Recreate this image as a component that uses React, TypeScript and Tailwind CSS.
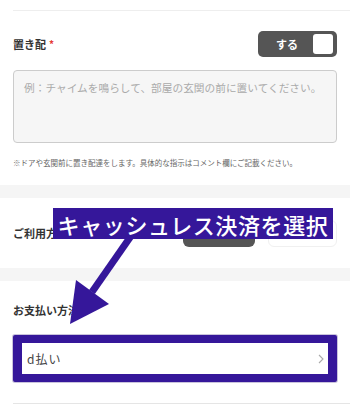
import React from "react";

export default function App() {
  return (
    <div
      className="relative w-[350px] h-[417px] overflow-hidden bg-white text-[#333]"
      style={{ fontFamily: '"Noto Sans CJK JP", "Noto Sans", sans-serif' }}
    >
      <div className="h-[10px]" />
      <div className="ml-[13px] border-t border-[#eeeeee]" />

      {/* 置き配 section */}
      <div className="px-[13px] pt-[20px] pb-[16px]">
        <div className="flex items-center justify-between h-[26px]">
          <div className="text-[11px] font-bold leading-[16px] text-[#333]">
            置き配<span className="text-[#e53935] ml-[3px] text-[10px] align-top">*</span>
          </div>
          <div className="w-[79px] h-[26px] rounded-[5px] bg-[#555555] flex items-center pl-[18px] pr-[4px]">
            <span className="flex-1 text-white text-[11px] font-bold leading-none">する</span>
            <span className="w-[20px] h-[20px] rounded-[3px] bg-white" />
          </div>
        </div>
        <div className="mt-[13px] h-[73px] rounded-[4px] border border-[#cccccc] bg-[#f6f6f6] px-[10px] pt-[9px]">
          <div className="text-[10.7px] leading-[16px] text-[#aaaaaa] whitespace-nowrap">
            例：チャイムを鳴らして、部屋の玄関の前に置いてください。
          </div>
        </div>
        <div className="mt-[14px] text-[7.5px] leading-[12px] text-[#666666] whitespace-nowrap">
          <span className="text-[#777777]">※</span>ドアや玄関前に置き配達をします。具体的な指示はコメント欄にご記載ください。
        </div>
      </div>

      <div className="h-[13px] bg-[#f5f5f5]" />

      {/* ご利用方法 section */}
      <div className="px-[13px] py-[21px]">
        <div className="flex items-center h-[28px]">
          <div className="flex-1 text-[11px] font-bold leading-[16px]">ご利用方法</div>
          <div className="w-[72px] h-[28px] rounded-[6px] bg-[#555555]" />
          <div className="ml-[13px] w-[69px] h-[27px] rounded-[6px] border border-[#f0f0f0] bg-white" />
        </div>
      </div>

      <div className="h-[13px] bg-[#f5f5f5]" />

      {/* お支払い方法 section */}
      <div className="px-[13px] pt-[21px]">
        <div className="text-[11px] font-bold leading-[16px]">お支払い方法</div>
        <div className="mt-[17px] h-[47px] rounded-[2px] border-[8px] border-x-[9px] border-[#35179a] shadow-[0_0_0_1px_#c9c3dc] bg-white flex items-center pl-[5px] pr-[4px]">
          <span className="flex-1 text-[12px] leading-none tracking-[1px] text-[#444444]">d払い</span>
          <svg width="6" height="10" viewBox="0 0 6 10" fill="none">
            <path d="M1 1 L5 5 L1 9" stroke="#aaaaaa" strokeWidth="1.1" />
          </svg>
        </div>
        <div className="mt-[21px] border-t border-[#e5e5e5] -mr-[13px]" />
      </div>

      {/* Annotation overlay */}
      <svg
        className="absolute left-0 top-0 pointer-events-none"
        width="350"
        height="417"
        viewBox="0 0 350 417"
      >
        <line x1="131" y1="236" x2="92" y2="292" stroke="#35179a" strokeWidth="7" />
        <polygon points="70,324 109,304 76,280" fill="#35179a" />
      </svg>
      <div className="absolute left-[53px] top-[208px] w-[280px] h-[31px] bg-[#35179a] flex items-center justify-center">
        <span className="text-white text-[22px] font-medium leading-none tracking-[0.6px] whitespace-nowrap">
          キャッシュレス決済を選択
        </span>
      </div>
    </div>
  );
}
